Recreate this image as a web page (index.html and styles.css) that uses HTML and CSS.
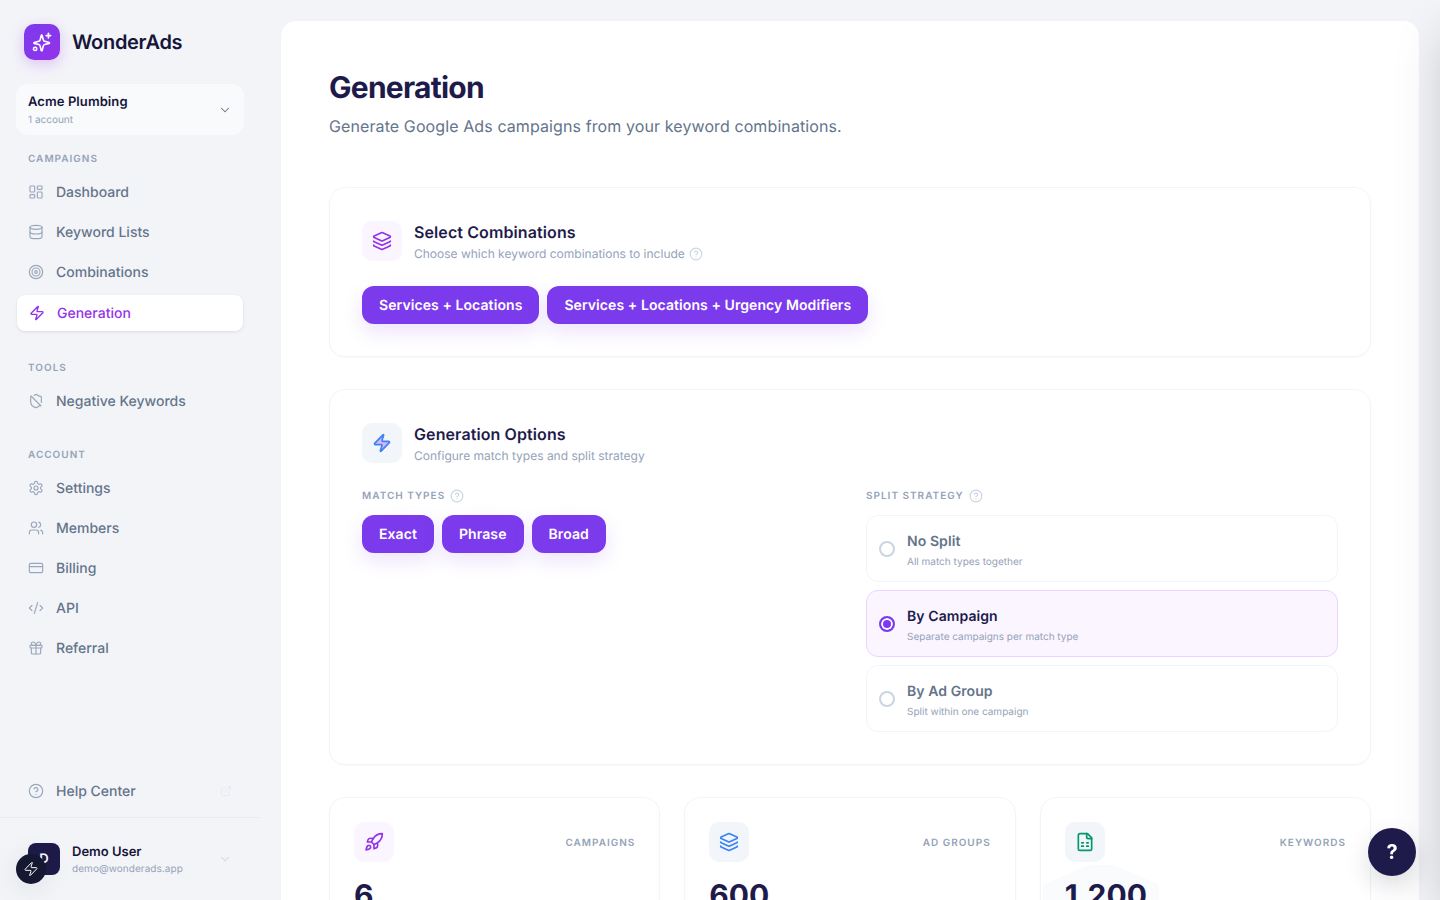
FILE: index.html
```html
<!DOCTYPE html>
<html lang="en">
<head>
<meta charset="utf-8">
<title>WonderAds – Generation</title>
<link rel="stylesheet" href="styles.css">
</head>
<body>
<svg class="sprite" aria-hidden="true">
  <symbol id="i-dash" viewBox="0 0 24 24"><rect width="7" height="9" x="3" y="3" rx="1"/><rect width="7" height="5" x="14" y="3" rx="1"/><rect width="7" height="9" x="14" y="12" rx="1"/><rect width="7" height="5" x="3" y="16" rx="1"/></symbol>
  <symbol id="i-db" viewBox="0 0 24 24"><ellipse cx="12" cy="5" rx="9" ry="3"/><path d="M3 5V19A9 3 0 0 0 21 19V5"/><path d="M3 12A9 3 0 0 0 21 12"/></symbol>
  <symbol id="i-target" viewBox="0 0 24 24"><circle cx="12" cy="12" r="10"/><circle cx="12" cy="12" r="6"/><circle cx="12" cy="12" r="2"/></symbol>
  <symbol id="i-zap" viewBox="0 0 24 24"><path d="M4 14a1 1 0 0 1-.78-1.63l9.9-10.2a.5.5 0 0 1 .86.46l-1.92 6.02A1 1 0 0 0 13 10h7a1 1 0 0 1 .78 1.63l-9.9 10.2a.5.5 0 0 1-.86-.46l1.92-6.02A1 1 0 0 0 11 14z"/></symbol>
  <symbol id="i-shield" viewBox="0 0 24 24"><path d="m4.5 4.5 15 15"/><path d="M5 5a1 1 0 0 0-1 1v7c0 5 3.5 7.5 7.67 8.94a1 1 0 0 0 .67.01c2.35-.82 4.48-1.97 5.9-3.71"/><path d="M9.309 3.652A12.252 12.252 0 0 0 11.24 2.28a1.17 1.17 0 0 1 1.52 0C14.51 3.81 17 5 19 5a1 1 0 0 1 1 1v7a9.784 9.784 0 0 1-.08 1.264"/></symbol>
  <symbol id="i-gear" viewBox="0 0 24 24"><path d="M12.22 2h-.44a2 2 0 0 0-2 2v.18a2 2 0 0 1-1 1.73l-.43.25a2 2 0 0 1-2 0l-.15-.08a2 2 0 0 0-2.73.73l-.22.38a2 2 0 0 0 .73 2.73l.15.1a2 2 0 0 1 1 1.72v.51a2 2 0 0 1-1 1.74l-.15.09a2 2 0 0 0-.73 2.73l.22.38a2 2 0 0 0 2.73.73l.15-.08a2 2 0 0 1 2 0l.43.25a2 2 0 0 1 1 1.73V20a2 2 0 0 0 2 2h.44a2 2 0 0 0 2-2v-.18a2 2 0 0 1 1-1.73l.43-.25a2 2 0 0 1 2 0l.15.08a2 2 0 0 0 2.73-.73l.22-.39a2 2 0 0 0-.73-2.73l-.15-.08a2 2 0 0 1-1-1.74v-.5a2 2 0 0 1 1-1.74l.15-.09a2 2 0 0 0 .73-2.73l-.22-.38a2 2 0 0 0-2.73-.73l-.15.08a2 2 0 0 1-2 0l-.43-.25a2 2 0 0 1-1-1.73V4a2 2 0 0 0-2-2z"/><circle cx="12" cy="12" r="3"/></symbol>
  <symbol id="i-users" viewBox="0 0 24 24"><path d="M16 21v-2a4 4 0 0 0-4-4H6a4 4 0 0 0-4 4v2"/><circle cx="9" cy="7" r="4"/><path d="M22 21v-2a4 4 0 0 0-3-3.87"/><path d="M16 3.13a4 4 0 0 1 0 7.75"/></symbol>
  <symbol id="i-card" viewBox="0 0 24 24"><rect width="20" height="14" x="2" y="5" rx="2"/><line x1="2" x2="22" y1="10" y2="10"/></symbol>
  <symbol id="i-code" viewBox="0 0 24 24"><path d="m18 16 4-4-4-4"/><path d="m6 8-4 4 4 4"/><path d="m14.5 4-5 16"/></symbol>
  <symbol id="i-gift" viewBox="0 0 24 24"><rect x="3" y="8" width="18" height="4" rx="1"/><path d="M12 8v13"/><path d="M19 12v7a2 2 0 0 1-2 2H7a2 2 0 0 1-2-2v-7"/><path d="M7.5 8a2.5 2.5 0 0 1 0-5A4.8 8 0 0 1 12 8a4.8 8 0 0 1 4.5-5 2.5 2.5 0 0 1 0 5"/></symbol>
  <symbol id="i-help" viewBox="0 0 24 24"><circle cx="12" cy="12" r="10"/><path d="M9.09 9a3 3 0 0 1 5.83 1c0 2-3 3-3 3"/><path d="M12 17h.01"/></symbol>
  <symbol id="i-ext" viewBox="0 0 24 24"><path d="M15 3h6v6"/><path d="M10 14 21 3"/><path d="M18 13v6a2 2 0 0 1-2 2H5a2 2 0 0 1-2-2V8a2 2 0 0 1 2-2h6"/></symbol>
  <symbol id="i-chev" viewBox="0 0 24 24"><path d="m6 9 6 6 6-6"/></symbol>
  <symbol id="i-layers" viewBox="0 0 24 24"><path d="M12.83 2.18a2 2 0 0 0-1.66 0L2.6 6.08a1 1 0 0 0 0 1.83l8.58 3.91a2 2 0 0 0 1.66 0l8.58-3.9a1 1 0 0 0 0-1.83z"/><path d="M2 12a1 1 0 0 0 .58.91l8.6 3.91a2 2 0 0 0 1.65 0l8.58-3.9A1 1 0 0 0 22 12"/><path d="M2 17a1 1 0 0 0 .58.91l8.6 3.91a2 2 0 0 0 1.65 0l8.58-3.9A1 1 0 0 0 22 17"/></symbol>
  <symbol id="i-rocket" viewBox="0 0 24 24"><path d="M4.5 16.5c-1.5 1.26-2 5-2 5s3.74-.5 5-2c.71-.84.7-2.13-.09-2.91a2.18 2.18 0 0 0-2.91-.09z"/><path d="m12 15-3-3a22 22 0 0 1 2-3.95A12.88 12.88 0 0 1 22 2c0 2.72-.78 7.5-6 11a22.35 22.35 0 0 1-4 2z"/><path d="M9 12H4s.55-3.03 2-4c1.62-1.08 5 0 5 0"/><path d="M12 15v5s3.03-.55 4-2c1.08-1.62 0-5 0-5"/></symbol>
  <symbol id="i-sheet" viewBox="0 0 24 24"><path d="M15 2H6a2 2 0 0 0-2 2v16a2 2 0 0 0 2 2h12a2 2 0 0 0 2-2V7Z"/><path d="M14 2v4a2 2 0 0 0 2 2h4"/><path d="M8 13h2"/><path d="M14 13h2"/><path d="M8 17h2"/><path d="M14 17h2"/></symbol>
  <symbol id="i-spark" viewBox="0 0 24 24"><path d="M9.9 16.2a2 2 0 0 0-1.4-1.4l-5-1.3a.5.5 0 0 1 0-.96l5-1.3a2 2 0 0 0 1.4-1.4l1.3-5a.5.5 0 0 1 .96 0l1.3 5a2 2 0 0 0 1.4 1.4l5 1.3a.5.5 0 0 1 0 .96l-5 1.3a2 2 0 0 0-1.4 1.4l-1.3 5a.5.5 0 0 1-.96 0z"/><path d="M19 2.5v5"/><path d="M21.5 5h-5"/><circle cx="4.5" cy="19.5" r="1.8"/></symbol>
</svg>

<div class="app">
  <aside class="sidebar">
    <div class="brand">
      <span class="logo"><svg class="ic ic-22"><use href="#i-spark"/></svg></span>
      <span class="brand-name">WonderAds</span>
    </div>
    <div class="account-picker">
      <div>
        <div class="account-name">Acme Plumbing</div>
        <div class="account-count">1 account</div>
      </div>
      <svg class="ic ic-14 chev-dark"><use href="#i-chev"/></svg>
    </div>

    <nav class="nav">
      <div class="nav-label first">CAMPAIGNS</div>
      <a class="nav-item"><svg class="ic ic-16"><use href="#i-dash"/></svg>Dashboard</a>
      <a class="nav-item"><svg class="ic ic-16"><use href="#i-db"/></svg>Keyword Lists</a>
      <a class="nav-item"><svg class="ic ic-16"><use href="#i-target"/></svg>Combinations</a>
      <a class="nav-item active"><svg class="ic ic-16"><use href="#i-zap"/></svg>Generation</a>

      <div class="nav-label tools">TOOLS</div>
      <a class="nav-item"><svg class="ic ic-16"><use href="#i-shield"/></svg>Negative Keywords</a>

      <div class="nav-label account">ACCOUNT</div>
      <a class="nav-item"><svg class="ic ic-16"><use href="#i-gear"/></svg>Settings</a>
      <a class="nav-item"><svg class="ic ic-16"><use href="#i-users"/></svg>Members</a>
      <a class="nav-item"><svg class="ic ic-16"><use href="#i-card"/></svg>Billing</a>
      <a class="nav-item"><svg class="ic ic-16"><use href="#i-code"/></svg>API</a>
      <a class="nav-item"><svg class="ic ic-16"><use href="#i-gift"/></svg>Referral</a>
    </nav>

    <a class="nav-item help"><svg class="ic ic-16"><use href="#i-help"/></svg>Help Center<svg class="ic ic-12 ext"><use href="#i-ext"/></svg></a>

    <div class="user">
      <span class="avatar">D</span>
      <div class="user-text">
        <div class="user-name">Demo User</div>
        <div class="user-mail">demo@wonderads.app</div>
      </div>
      <svg class="ic ic-14 chev-light"><use href="#i-chev"/></svg>
    </div>
  </aside>

  <main class="panel">
    <h1 class="title">Generation</h1>
    <p class="subtitle">Generate Google Ads campaigns from your keyword combinations.</p>

    <section class="card first-card">
      <header class="card-head">
        <span class="tile tile-purple"><svg class="ic ic-20"><use href="#i-layers"/></svg></span>
        <div>
          <h2 class="card-title">Select Combinations</h2>
          <p class="card-sub">Choose which keyword combinations to include <svg class="ic ic-14 hint"><use href="#i-help"/></svg></p>
        </div>
      </header>
      <div class="btn-row">
        <button class="pill">Services + Locations</button>
        <button class="pill">Services + Locations + Urgency Modifiers</button>
      </div>
    </section>

    <section class="card">
      <header class="card-head">
        <span class="tile tile-blue"><svg class="ic ic-20 zap-tint"><use href="#i-zap"/></svg></span>
        <div>
          <h2 class="card-title">Generation Options</h2>
          <p class="card-sub">Configure match types and split strategy</p>
        </div>
      </header>
      <div class="options">
        <div>
          <div class="field-label">MATCH TYPES <svg class="ic ic-14 hint"><use href="#i-help"/></svg></div>
          <div class="btn-row">
            <button class="pill">Exact</button>
            <button class="pill">Phrase</button>
            <button class="pill">Broad</button>
          </div>
        </div>
        <div>
          <div class="field-label">SPLIT STRATEGY <svg class="ic ic-14 hint"><use href="#i-help"/></svg></div>
          <div class="radio-list">
            <div class="radio-card"><span class="radio"></span><div class="radio-text"><div class="radio-title">No Split</div><div class="radio-sub">All match types together</div></div></div>
            <div class="radio-card selected"><span class="radio"></span><div class="radio-text"><div class="radio-title">By Campaign</div><div class="radio-sub">Separate campaigns per match type</div></div></div>
            <div class="radio-card"><span class="radio"></span><div class="radio-text"><div class="radio-title">By Ad Group</div><div class="radio-sub">Split within one campaign</div></div></div>
          </div>
        </div>
      </div>
    </section>

    <div class="stats">
      <div class="stat">
        <div class="stat-top"><span class="tile tile-purple"><svg class="ic ic-20"><use href="#i-rocket"/></svg></span><span class="stat-label">CAMPAIGNS</span></div>
        <div class="stat-value">6</div>
      </div>
      <div class="stat">
        <div class="stat-top"><span class="tile tile-blue"><svg class="ic ic-20"><use href="#i-layers"/></svg></span><span class="stat-label">AD GROUPS</span></div>
        <div class="stat-value">600</div>
      </div>
      <div class="stat stat-glow">
        <div class="stat-top"><span class="tile tile-green"><svg class="ic ic-20"><use href="#i-sheet"/></svg></span><span class="stat-label">KEYWORDS</span></div>
        <div class="stat-value">1,200</div>
      </div>
    </div>
  </main>
</div>

<div class="drawer-shadow"></div>
<button class="float-zap"><svg class="ic ic-16"><use href="#i-zap"/></svg></button>
<button class="float-help">?</button>
</body>
</html>
```

FILE: styles.css
```css
* { box-sizing: border-box; }
html, body { margin: 0; height: 100%; overflow: hidden; }
body { background: #f3f4f8; font-family: Inter, "Noto Sans", sans-serif; color: #1e1b4b; text-rendering: geometricPrecision; }
.sprite { display: none; }
.ic { fill: none; stroke: currentColor; stroke-width: 2; stroke-linecap: round; stroke-linejoin: round; flex: none; }
.ic-22 { width: 22px; height: 22px; stroke-width: 1.75; }
.ic-20 { width: 20px; height: 20px; }
.ic-16 { width: 16px; height: 16px; }
.ic-14 { width: 14px; height: 14px; }
.ic-12 { width: 12px; height: 12px; }

.app { display: flex; height: 100vh; }
.sidebar { width: 260px; flex: none; display: flex; flex-direction: column; margin-right: 20px; }
.brand { display: flex; align-items: center; gap: 12px; padding: 24px 24px 0; }
.logo { width: 36px; height: 36px; border-radius: 10px; background: linear-gradient(135deg, #7c3aed, #9333ea); color: #fff; display: flex; align-items: center; justify-content: center; box-shadow: 0 4px 14px rgba(147, 51, 234, .25); }
.brand-name { font-size: 20px; font-weight: 600; letter-spacing: -0.015em; color: #16163a; }
.account-picker { margin: 24px 16px 0; height: 51px; width: 228px; padding: 0 12px; background: #f8fafc; border-radius: 12px; display: flex; align-items: center; justify-content: space-between; }
.account-name { font-size: 13px; font-weight: 600; line-height: 18px; letter-spacing: .08px; color: #16163a; }
.account-count { font-size: 10px; line-height: 14px; margin-top: 2px; color: #94a3b8; }
.chev-dark { color: #64748b; stroke-width: 1.75; }
.chev-light { color: #cbd5e1; stroke-width: 1.75; }

.nav { display: flex; flex-direction: column; padding: 0 16px; flex: 1; }
.nav-label { font-size: 10px; font-weight: 600; letter-spacing: .1em; color: #94a3b8; padding-left: 12px; line-height: 14px; }
.nav-label.first { margin-top: 17px; margin-bottom: 6px; }
.nav-label.tools { margin-top: 30px; margin-bottom: 6px; }
.nav-label.account { margin-top: 27px; margin-bottom: 6px; }
.nav-item { height: 40px; display: flex; align-items: center; gap: 12px; padding: 0 12px; font-size: 14px; font-weight: 500; color: #64748b; }
.nav-item .ic { color: #9aa7bb; stroke-width: 1.75; }
.nav-item.active { height: 36px; margin: 3px 1px 0; background: #fff; border-radius: 8px; color: #9333ea; box-shadow: 0 1px 3px rgba(15, 23, 42, .1); }
.nav-item.active .ic { color: #9333ea; stroke-width: 2; }
.nav-item.help { margin: 0 16px 6px; }
.nav-item .ext { margin-left: auto; color: #e2e8f0; }

.user { height: 83px; border-top: 1px solid #e8ebf1; display: flex; align-items: center; gap: 12px; padding: 0 28px; flex: none; }
.avatar { width: 32px; height: 32px; background: #1e1b4b; color: #fff; border-radius: 8px; display: flex; align-items: center; justify-content: center; font-size: 13px; font-weight: 600; }
.user-text { flex: 1; }
.user-name { font-size: 13px; font-weight: 600; line-height: 18px; color: #16163a; }
.user-mail { font-size: 10px; line-height: 14px; margin-top: 1px; letter-spacing: .06px; color: #94a3b8; }

.panel { flex: 1; margin: 20px 20px 0 0; background: #fff; border: 1px solid #f1f3f7; border-bottom: 0; border-radius: 16px 16px 0 0; padding: 48px 48px 0; overflow: hidden; }
.title { margin: 1px 0 0; font-size: 30px; font-weight: 700; line-height: 36px; letter-spacing: -0.025em; color: #1e1b4b; }
.subtitle { margin: 8px 0 0; font-size: 16px; line-height: 24px; letter-spacing: .1px; color: #64748b; }

.card { border: 1px solid #f1f5f9; border-radius: 16px; padding: 32px; margin-bottom: 32px; box-shadow: 0 1px 2px rgba(15, 23, 42, .03); }
.first-card { margin-top: 49px; }
.card-head { display: flex; align-items: center; gap: 12px; margin-bottom: 24px; }
.tile { width: 40px; height: 40px; border-radius: 10px; display: flex; align-items: center; justify-content: center; flex: none; }
.tile-purple { background: #faf5ff; color: #9333ea; }
.tile-blue { color: #3b82f6; background: #f2f6fb; }
.tile-green { color: #059669; background: #f2f6fb; }
.zap-tint { fill: #d8b4fe; }
.card-title { margin: 0; font-size: 16px; font-weight: 600; line-height: 24px; letter-spacing: .1px; color: #1e1b4b; }
.card-sub { margin: 2px 0 0; font-size: 12px; line-height: 16px; color: #94a3b8; display: flex; align-items: center; gap: 4px; }
.hint { color: #cbd5e1; stroke-width: 2; }

.btn-row { display: flex; gap: 8px; }
.pill { height: 38px; padding: 0 17px; border: 0; border-radius: 12px; background: #7c3aed; color: #fff; font-family: inherit; font-size: 14px; font-weight: 600; letter-spacing: .08px; text-rendering: geometricPrecision; box-shadow: 0 8px 20px rgba(124, 58, 237, .14); }

.options { display: grid; grid-template-columns: 1fr 1fr; gap: 32px; }
.field-label { display: flex; align-items: center; gap: 5px; margin-top: 1px; font-size: 10px; font-weight: 600; letter-spacing: .1em; line-height: 14px; color: #94a3b8; margin-bottom: 12px; }
.radio-list { display: flex; flex-direction: column; gap: 8px; }
.radio-card { height: 67px; border: 1px solid #f1f5f9; border-radius: 12px; padding: 0 12px; display: flex; align-items: center; gap: 12px; }
.radio { width: 16px; height: 16px; border-radius: 50%; border: 2px solid #cbd5e1; flex: none; }
.radio-text { padding-top: 4px; }
.radio-title { font-size: 14px; font-weight: 600; line-height: 20px; letter-spacing: .08px; color: #64748b; }
.radio-sub { font-size: 10px; line-height: 14px; margin-top: 3px; color: #94a3b8; }
.selected { background: #faf5ff; border-color: #e9d5ff; }
.selected .radio { border-color: #7c3aed; background: #7c3aed; box-shadow: inset 0 0 0 2px #fff; }
.selected .radio-title { color: #1e1b4b; }

.stats { display: grid; grid-template-columns: repeat(3, 1fr); gap: 24px; }
.stat { position: relative; border: 1px solid #f1f5f9; border-radius: 16px; padding: 24px; height: 160px; box-shadow: 0 1px 2px rgba(15, 23, 42, .03); }
.stat-glow::before { content: ""; position: absolute; left: 2px; top: 67px; width: 116px; height: 70px; background: #fafbfd; clip-path: polygon(0 28%, 40% 0, 62% 0, 100% 28%, 100% 100%, 0 100%); }
.stat-top { position: relative; display: flex; align-items: center; justify-content: space-between; }
.stat-label { font-size: 10px; font-weight: 600; letter-spacing: .1em; padding-top: 1px; color: #94a3b8; }
.stat-value { position: relative; margin-top: 16px; font-size: 30px; font-weight: 700; line-height: 36px; color: #1e1b4b; }

.drawer-shadow { position: fixed; left: 100%; top: 0; width: 400px; height: 100vh; box-shadow: 0 25px 50px -12px rgba(0, 0, 0, .25); }
.float-zap { position: fixed; left: 16px; top: 854px; width: 30px; height: 30px; border: 0; padding: 0; border-radius: 50%; background: #141830; color: #fff; display: flex; align-items: center; justify-content: center; box-shadow: 0 4px 30px rgba(15, 23, 42, .1); }
.float-zap .ic { stroke-width: 1.5; }
.float-help { position: fixed; left: 1368px; top: 828px; width: 48px; height: 48px; border: 0; padding: 0; border-radius: 50%; background: #1e1b4b; color: #fff; font-family: inherit; font-size: 20px; font-weight: 700; box-shadow: 0 10px 25px rgba(15, 23, 42, .15); }
```
